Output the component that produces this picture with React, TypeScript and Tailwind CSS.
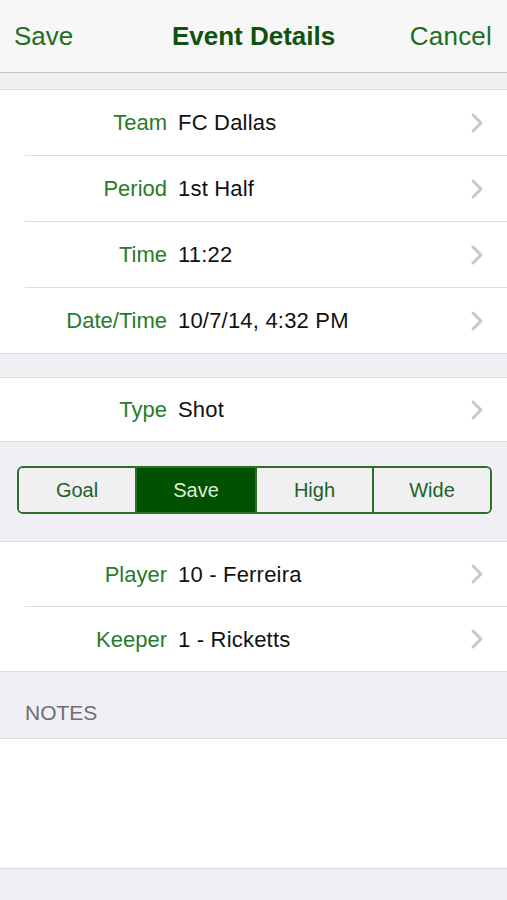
import React, { FC } from "react";

const font = { fontFamily: '"Liberation Sans", Arial, sans-serif' };

const Chevron: FC = () => (
  <svg width="14" height="22" viewBox="0 0 14 22" className="shrink-0">
    <polyline
      points="3,3 11,11 3,19"
      fill="none"
      stroke="#c7c7cc"
      strokeWidth="3"
      strokeLinecap="round"
      strokeLinejoin="round"
    />
  </svg>
);

type RowProps = { label: string; value: string; h?: string };

const Row: FC<RowProps> = ({ label, value, h = "h-[65px]" }) => (
  <div className={`flex items-center ${h} pr-[23px]`}>
    <div className="w-[167px] shrink-0 text-right text-[22px] text-[#2a7a2a]">
      {label}
    </div>
    <div className="ml-[11px] flex-1 text-[22px] tracking-[0.2px] text-[#111]">
      {value}
    </div>
    <Chevron />
  </div>
);

const Sep: FC = () => (
  <div className="pl-[25px]">
    <div className="h-px bg-[#dcdce0]" />
  </div>
);

const segments = ["Goal", "Save", "High", "Wide"];

const App: FC = () => {
  const selected = "Save";

  return (
    <div className="min-h-[900px] w-[507px] bg-[#efeff4]" style={font}>
      {/* nav bar */}
      <div className="flex h-[73px] items-center justify-between border-b border-[#c2c2c6] bg-[#f7f7f7] pl-[14px] pr-[15px]">
        <span className="text-[26px] text-[#1f6e1f]">Save</span>
        <span className="ml-[24px] text-[26px] font-bold text-[#0f520f]">
          Event Details
        </span>
        <span className="text-[26px] tracking-[0.2px] text-[#1f6e1f]">Cancel</span>
      </div>

      <div className="h-[16px]" />

      <div className="border-y border-[#dcdce0] bg-white">
        <Row label="Team" value="FC Dallas" />
        <Sep />
        <Row label="Period" value="1st Half" />
        <Sep />
        <Row label="Time" value="11:22" />
        <Sep />
        <Row label="Date/Time" value="10/7/14, 4:32 PM" />
      </div>

      <div className="h-[23px]" />

      <div className="border-y border-[#dcdce0] bg-white">
        <Row label="Type" value="Shot" h="h-[63px]" />
      </div>

      {/* segmented control */}
      <div className="pl-[17px] pr-[15px] pt-[24px] pb-[27px]">
        <div className="grid h-[48px] grid-cols-[117fr_121fr_118fr_119fr] overflow-hidden rounded-[6px] border-2 border-[#2a6e2a]">
          {segments.map((s, i) => (
            <div
              key={s}
              className={`flex items-center justify-center text-[20px] ${
                i > 0 ? "border-l-2 border-[#2a6e2a]" : ""
              } ${
                s === selected
                  ? "bg-[#005200] text-[#dcefdc]"
                  : "bg-[#f0f0f3] text-[#1e601e]"
              }`}
            >
              {s}
            </div>
          ))}
        </div>
      </div>

      <div className="border-y border-[#dcdce0] bg-white">
        <Row label="Player" value="10 - Ferreira" h="h-[64px]" />
        <Sep />
        <Row label="Keeper" value="1 - Ricketts" h="h-[64px]" />
      </div>

      <div className="flex h-[66px] items-end px-[25px] pb-[10px]">
        <span className="text-[21px] text-[#6d6d72]">NOTES</span>
      </div>

      <div className="h-[131px] border-y border-[#dcdce0] bg-white" />
    </div>
  );
};

export default App;
